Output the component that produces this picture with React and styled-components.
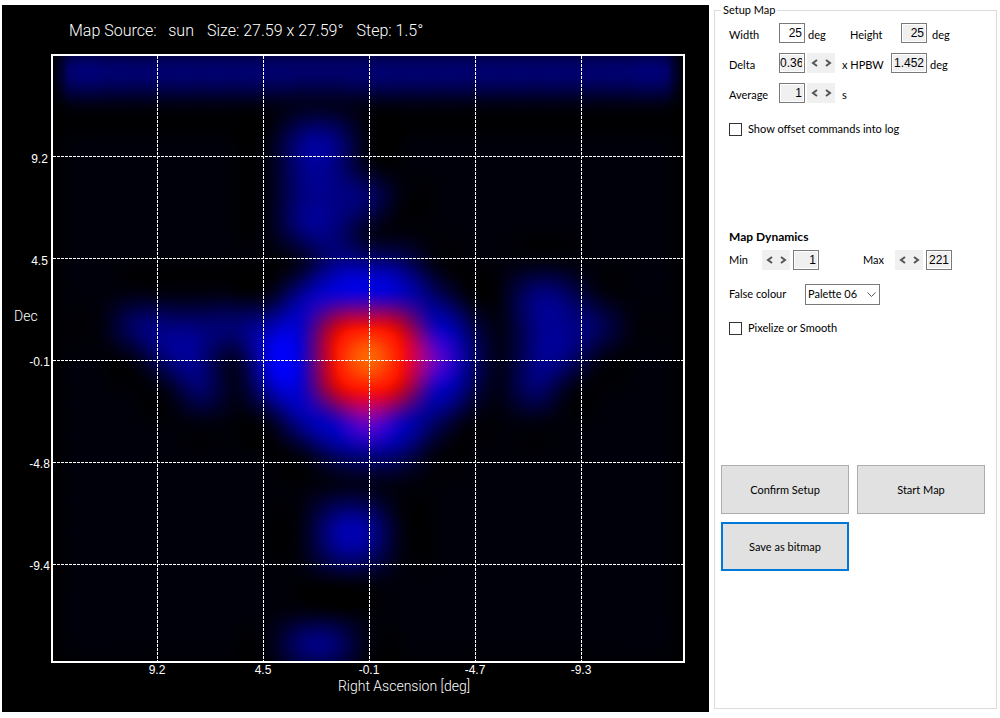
import React, { useLayoutEffect, useRef, useState } from 'react';
import styled, { createGlobalStyle } from 'styled-components';

const labelFont = "11px/14px Lato, 'Liberation Sans', sans-serif";
const inputFont = "12px/14px 'Liberation Sans', Arial, sans-serif";

const GlobalStyle = createGlobalStyle`
  * {
    box-sizing: border-box;
  }

  body {
    margin: 0;
    background-color: white;
    color: black;
    font: ${labelFont};
  }
`;

const CELLS = 19;
const MAP_WIDTH = 630;
const MAP_HEIGHT = 605;
const SIDE_FADE = 18;
const SPREAD = 1.2;
const X_TICKS = ['9.2', '4.5', '-0.1', '-4.7', '-9.3'];
const Y_TICKS = ['9.2', '4.5', '-0.1', '-4.8', '-9.4'];
const X_LINES = [104, 210, 316, 422, 528];
const Y_LINES = [100, 202, 304, 406, 508];

// one letter per measured cell
const PALETTE = {
  '.': [0, 0, 10],
  a: [0, 0, 105],
  b: [0, 0, 130],
  c: [0, 0, 136],
  d: [0, 0, 142],
  e: [0, 0, 170],
  f: [0, 0, 212],
  g: [5, 0, 235],
  p: [130, 0, 200],
  r: [215, 0, 0],
  s: [255, 10, 0],
  o: [255, 140, 0],
};

const SCAN = [
  'cbbbbbbbbbbbbbbbbbc',
  '...................',
  '.......cc..........',
  '.......cb..........',
  '.......bbb.........',
  '.......cb..........',
  '........bba........',
  '.......eggfa..ca...',
  '..bbbbefrsrfa.bca..',
  '...cb.gfsospd.cb...',
  '....b.efrsrfa.b....',
  '.......efpfa.......',
  '........aca........',
  '...................',
  '........dd.........',
  '........dd.........',
  '...................',
  '...................',
  '.......cc..........',
];

const cubic = (t) => {
  const x = Math.abs(t) / SPREAD;
  if (x < 1) return (1.5 * x * x * x - 2.5 * x * x + 1) / SPREAD;
  if (x < 2) return (-0.5 * x * x * x + 2.5 * x * x - 4 * x + 2) / SPREAD;
  return 0;
};

const getTaps = (length) =>
  Array.from({ length }, (_, n) => {
    const pos = ((n + 0.5) * CELLS) / length - 0.5;
    const first = Math.floor(pos) - 2;
    return [0, 1, 2, 3, 4, 5]
      .map((k) => ({ cell: first + k, weight: cubic(pos - first - k) }))
      .filter(({ cell }) => cell >= 0 && cell < CELLS);
  });

const drawMap = (canvas) => {
  const ctx = canvas.getContext('2d');
  const image = ctx.createImageData(MAP_WIDTH, MAP_HEIGHT);
  const columns = getTaps(MAP_WIDTH);
  const rows = getTaps(MAP_HEIGHT);

  rows.forEach((rowTaps, y) => {
    columns.forEach((columnTaps, x) => {
      const fade = Math.min(1, (x + 3) / SIDE_FADE, (MAP_WIDTH - x + 2) / SIDE_FADE);
      const rgb = [0, 0, 0];
      rowTaps.forEach((row) => {
        columnTaps.forEach((column) => {
          const color = PALETTE[SCAN[row.cell][column.cell]];
          const weight = row.weight * column.weight * fade;
          rgb[0] += color[0] * weight;
          rgb[1] += color[1] * weight;
          rgb[2] += color[2] * weight;
        });
      });
      image.data.set([...rgb, 255], (y * MAP_WIDTH + x) * 4);
    });
  });
  ctx.putImageData(image, 0, 0);
};

const Window = styled.main`
  display: flex;
  gap: 5px;
  min-height: 100vh;
  padding: 5px 3px 6px 2px;
`;

const MapPanel = styled.section`
  flex: 1;
  min-width: 0;
  display: grid;
  grid-template-columns: 49px 1fr 24px;
  grid-template-rows: 49px 1fr 49px;
  background-color: black;
  color: white;
  font-family: Roboto, 'Liberation Sans', sans-serif;
  font-weight: 300;
`;

const MapTitle = styled.h1`
  grid-column: 2 / 4;
  display: flex;
  gap: 13px;
  margin: 0;
  padding: 16px 0 0 18px;
  font-size: 16px;
  line-height: 20px;
  font-weight: 300;
  white-space: pre;
`;

const YAxis = styled.div`
  grid-column: 1;
  grid-row: 2;
  display: grid;
  grid-template-columns: 12px 14px 1fr;
  grid-template-rows: 49fr repeat(5, 102fr) 46fr;
  align-items: center;
  padding-top: 5px;
`;

const Tick = styled.span`
  grid-column: ${({ $column }) => $column};
  grid-row: ${({ $row }) => $row};
  text-align: center;
  font-family: 'Liberation Sans', Arial, sans-serif;
  font-size: 12px;
  line-height: 14px;
`;

const YName = styled.span`
  grid-column: 2 / 4;
  grid-row: 3 / 5;
  padding-top: 8px;
  font-size: 14px;
  line-height: 14px;
`;

const Plot = styled.div`
  grid-column: 2;
  grid-row: 2;
  position: relative;
  min-height: 0;
  border: 2px solid white;
`;

const HeatMap = styled.canvas`
  position: absolute;
  inset: 0;
  width: 100%;
  height: 100%;
`;

const GridLines = styled.svg`
  position: absolute;
  inset: 0;
  width: 100%;
  height: 100%;
  stroke: white;
  stroke-dasharray: 3 1;
  shape-rendering: crispEdges;
`;

const XAxis = styled.div`
  grid-column: 2;
  grid-row: 3;
  display: grid;
  grid-template-columns: 53fr repeat(5, 106fr) 51fr;
  grid-template-rows: 15px 16px;
  text-align: center;
`;

const XName = styled.span`
  grid-column: 1 / -1;
  grid-row: 2;
  padding-left: 72px;
  font-size: 14px;
  line-height: 16px;
`;

const SetupPanel = styled.fieldset`
  flex: 0 0 283px;
  display: flex;
  flex-direction: column;
  margin: 0 0 3px;
  padding: 8px 11px 0 14px;
  border: 1px solid #dcdcdc;
`;

const Legend = styled.legend`
  margin-left: -8px;
  padding: 0 2px;
  line-height: 10px;
`;

const Label = styled.label`
  width: ${({ $width }) => $width}px;
  white-space: nowrap;
`;

const Unit = styled.span`
  width: ${({ $width }) => $width}px;
  padding-left: ${({ $indent = 3 }) => $indent}px;
  white-space: nowrap;
`;

const Row = styled.div`
  display: flex;
  align-items: center;
  height: 20px;
  margin-bottom: 10px;
`;

const SetupRow = styled(Row)`
  ${Label}, ${Unit} {
    padding-top: 4px;
  }
`;

const PaletteRow = styled(Row)`
  margin: 4px 0 8px;
`;

const NumberBox = styled.input`
  width: ${({ $wide }) => ($wide ? 36 : 26)}px;
  height: 20px;
  padding: 0 2px 0 0;
  border: 1px solid #7a7a7a;
  box-shadow: inset 0 0 0 1px white;
  background-color: ${({ readOnly }) => (readOnly ? '#f0f0f0' : 'white')};
  color: black;
  font: ${inputFont};
  text-align: right;
`;

const Spinner = styled.span`
  display: flex;
  width: 28px;
  height: 20px;
  margin: 0 ${({ $after = 0 }) => $after}px 0 ${({ $before = 0 }) => $before}px;
  background-color: #f0f0f0;
`;

const SpinButton = styled.button`
  flex: 1;
  display: flex;
  align-items: center;
  justify-content: center;
  padding: 0;
  border: none;
  background: none;
`;

const CheckRow = styled.label`
  display: flex;
  align-items: center;
  gap: 6px;
  height: 14px;
  margin-top: 9px;
`;

const CheckBox = styled.input`
  appearance: none;
  width: 13px;
  height: 13px;
  margin: 0;
  border: 1px solid #333;
  background-color: white;

  &:checked {
    background-color: #333;
    box-shadow: inset 0 0 0 2px white;
  }
`;

const Dynamics = styled.section`
  display: flex;
  flex-direction: column;
  margin-top: 93px;
`;

const Heading = styled.h2`
  margin: 0 0 5px;
  font-size: 12px;
  line-height: 16px;
  font-weight: 700;
`;

const SelectWrap = styled.span`
  position: relative;
  display: flex;
`;

const Select = styled.select`
  appearance: none;
  width: 75px;
  height: 21px;
  padding: 0 0 0 2px;
  border: 1px solid #7a7a7a;
  border-radius: 0;
  background-color: white;
  color: black;
  font: ${labelFont};
`;

const SelectArrow = styled.svg`
  position: absolute;
  top: 8px;
  right: 4px;
  pointer-events: none;
`;

const Actions = styled.div`
  display: grid;
  grid-template-columns: 1fr 1fr;
  grid-auto-rows: 49px;
  gap: 8px;
  margin: 130px 0 0 -8px;
`;

const Button = styled.button`
  padding: 0;
  border: ${({ $focused }) => ($focused ? '2px solid #0078d7' : '1px solid #adadad')};
  background-color: #e1e1e1;
  color: black;
  font: ${labelFont};
`;

const Spin = ({ name, ...rest }) => (
  <Spinner {...rest}>
    <SpinButton type='button' aria-label={`Decrease ${name}`}>
      <svg width='7' height='8' viewBox='0 0 7 8' fill='none' stroke='#555' strokeWidth='2'>
        <path d='M6 1 L2 4 L6 7' />
      </svg>
    </SpinButton>
    <SpinButton type='button' aria-label={`Increase ${name}`}>
      <svg width='7' height='8' viewBox='0 0 7 8' fill='none' stroke='#555' strokeWidth='2'>
        <path d='M1 1 L5 4 L1 7' />
      </svg>
    </SpinButton>
  </Spinner>
);

const SkyMap = () => {
  const canvasRef = useRef(null);

  useLayoutEffect(() => {
    drawMap(canvasRef.current);
  }, []);

  return (
    <MapPanel>
      <MapTitle>
        <span>{'Map Source:   sun'}</span>
        <span>Size: 27.59 x 27.59°</span>
        <span>Step: 1.5°</span>
      </MapTitle>
      <YAxis>
        {Y_TICKS.map((tick, i) => (
          <Tick key={tick} $row={i + 2} $column={3}>
            {tick}
          </Tick>
        ))}
        <YName>Dec</YName>
      </YAxis>
      <Plot>
        <HeatMap ref={canvasRef} width={MAP_WIDTH} height={MAP_HEIGHT} />
        <GridLines viewBox={`0 0 ${MAP_WIDTH} ${MAP_HEIGHT}`} preserveAspectRatio='none'>
          {X_LINES.map((x) => (
            <line key={x} x1={x + 0.5} x2={x + 0.5} y1='0' y2={MAP_HEIGHT} />
          ))}
          {Y_LINES.map((y) => (
            <line key={y} x1='0' x2={MAP_WIDTH} y1={y + 0.5} y2={y + 0.5} />
          ))}
        </GridLines>
      </Plot>
      <XAxis>
        {X_TICKS.map((tick, i) => (
          <Tick key={tick} $row={1} $column={i + 2}>
            {tick}
          </Tick>
        ))}
        <XName>Right Ascension [deg]</XName>
      </XAxis>
    </MapPanel>
  );
};

const App = () => {
  const [size, setSize] = useState('25');
  const [logOffsets, setLogOffsets] = useState(false);
  const [pixelize, setPixelize] = useState(false);

  return (
    <Window>
      <GlobalStyle />
      <SkyMap />
      <SetupPanel>
        <Legend>Setup Map</Legend>
        <SetupRow>
          <Label htmlFor='width' $width={50}>Width</Label>
          <NumberBox id='width' value={size} onChange={(e) => setSize(e.target.value)} />
          <Unit $width={45}>deg</Unit>
          <Label htmlFor='height' $width={51}>Height</Label>
          <NumberBox id='height' value={size} readOnly />
          <Unit $indent={5}>deg</Unit>
        </SetupRow>
        <SetupRow>
          <Label htmlFor='delta' $width={50}>Delta</Label>
          <NumberBox id='delta' value='0.36' readOnly />
          <Spin name='delta' $before={2} />
          <Unit as='label' htmlFor='hpbw' $indent={7} $width={56}>x HPBW</Unit>
          <NumberBox id='hpbw' value='1.452' readOnly $wide />
          <Unit>deg</Unit>
        </SetupRow>
        <SetupRow>
          <Label htmlFor='average' $width={50}>Average</Label>
          <NumberBox id='average' value='1' readOnly />
          <Spin name='average' $before={2} />
          <Unit $indent={7}>s</Unit>
        </SetupRow>
        <CheckRow>
          <CheckBox type='checkbox' checked={logOffsets} onChange={() => setLogOffsets(!logOffsets)} />
          Show offset commands into log
        </CheckRow>
        <Dynamics>
          <Heading>Map Dynamics</Heading>
          <Row>
            <Label htmlFor='min' $width={33}>Min</Label>
            <Spin name='min' $after={3} />
            <NumberBox id='min' value='1' readOnly />
            <Unit $width={44} />
            <Label htmlFor='max' $width={32}>Max</Label>
            <Spin name='max' $after={3} />
            <NumberBox id='max' value='221' readOnly />
          </Row>
          <PaletteRow>
            <Label htmlFor='palette' $width={76}>False colour</Label>
            <SelectWrap>
              <Select id='palette' defaultValue='Palette 06'>
                <option>Palette 06</option>
              </Select>
              <SelectArrow width='9' height='6' viewBox='0 0 9 6' fill='none' stroke='#555'>
                <path d='M0.5 0.5 L4.5 4.5 L8.5 0.5' />
              </SelectArrow>
            </SelectWrap>
          </PaletteRow>
          <CheckRow>
            <CheckBox type='checkbox' checked={pixelize} onChange={() => setPixelize(!pixelize)} />
            Pixelize or Smooth
          </CheckRow>
        </Dynamics>
        <Actions>
          <Button type='button'>Confirm Setup</Button>
          <Button type='button'>Start Map</Button>
          <Button type='button' $focused>Save as bitmap</Button>
        </Actions>
      </SetupPanel>
    </Window>
  );
};

export default App;
